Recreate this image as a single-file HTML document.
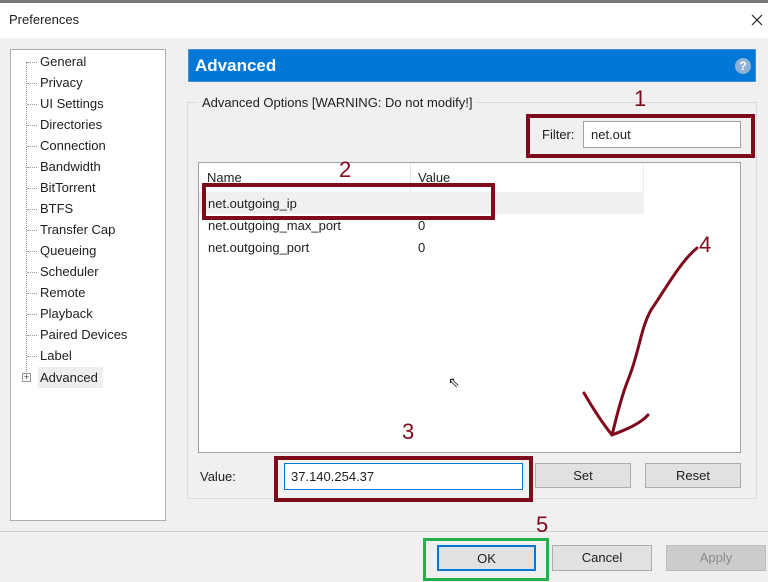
<!DOCTYPE html>
<html><head><style>
*{margin:0;padding:0;box-sizing:border-box}
body{width:768px;height:582px;background:#f0f0f0;font-family:"Liberation Sans",sans-serif;font-size:13px;color:#1e1e1e;position:relative;overflow:hidden}
.a{position:absolute;white-space:nowrap}
.red{position:absolute;border:4px solid #7e0a1c}
.num{position:absolute;color:#7e0a1c;font-size:22px;font-family:"Liberation Sans",sans-serif}
.btn{position:absolute;background:#e1e1e1;border:1px solid #adadad;text-align:center;line-height:23px}
.tree div{position:absolute;left:40px}
.dot{position:absolute;left:27px;width:10px;border-top:1px dotted #999}
</style></head><body>
<div class="a" style="left:0;top:0;width:768px;height:3px;background:#777"></div>
<div class="a" style="left:0;top:3px;width:768px;height:35px;background:#fff"></div>
<div class="a" style="left:9px;top:12px;font-size:13px">Preferences</div>
<svg class="a" style="left:751px;top:14px" width="12" height="12"><path d="M1 1L11 11M11 1L1 11" stroke="#222" stroke-width="1.2"/></svg>

<div class="a" style="left:10px;top:49px;width:156px;height:472px;background:#fff;border:1px solid #adadad"></div>
<div class="a" style="left:26px;top:62px;height:310px;border-left:1px dotted #999"></div>
<div class="tree">
<div class="a" style="top:54px">General</div>
<div class="a" style="top:75px">Privacy</div>
<div class="a" style="top:96px">UI Settings</div>
<div class="a" style="top:117px">Directories</div>
<div class="a" style="top:138px">Connection</div>
<div class="a" style="top:159px">Bandwidth</div>
<div class="a" style="top:180px">BitTorrent</div>
<div class="a" style="top:201px">BTFS</div>
<div class="a" style="top:222px">Transfer Cap</div>
<div class="a" style="top:243px">Queueing</div>
<div class="a" style="top:264px">Scheduler</div>
<div class="a" style="top:285px">Remote</div>
<div class="a" style="top:306px">Playback</div>
<div class="a" style="top:327px">Paired Devices</div>
<div class="a" style="top:348px">Label</div>
<div class="a" style="top:367px;left:38px;width:65px;height:21px;background:#eee;padding:3px 2px">Advanced</div>
</div>
<div class="dot" style="top:62px"></div><div class="dot" style="top:83px"></div><div class="dot" style="top:104px"></div><div class="dot" style="top:125px"></div><div class="dot" style="top:146px"></div><div class="dot" style="top:167px"></div><div class="dot" style="top:188px"></div><div class="dot" style="top:209px"></div><div class="dot" style="top:230px"></div><div class="dot" style="top:251px"></div><div class="dot" style="top:272px"></div><div class="dot" style="top:293px"></div><div class="dot" style="top:314px"></div><div class="dot" style="top:335px"></div><div class="dot" style="top:356px"></div>
<div class="a" style="left:22px;top:373px;width:9px;height:9px;border:1px solid #999;background:#fff;font-size:9px;line-height:7px;text-align:center;color:#333">+</div>

<div class="a" style="left:188px;top:49px;width:568px;height:33px;background:#0078d7;border:1px solid #4a90d0"></div>
<div class="a" style="left:195px;top:56px;color:#fff;font-weight:bold;font-size:17px">Advanced</div>
<div class="a" style="left:735px;top:58px;width:16px;height:16px;border-radius:50%;background:#8fb3d8;color:#fff;font-size:12px;font-weight:bold;text-align:center;line-height:16px">?</div>

<div class="a" style="left:187px;top:102px;width:570px;height:397px;border:1px solid #dcdcdc"></div>
<div class="a" style="left:198px;top:95px;background:#f0f0f0;padding:0 4px">Advanced Options [WARNING: Do not modify!]</div>

<div class="a" style="left:542px;top:127px">Filter:</div>
<div class="a" style="left:583px;top:121px;width:158px;height:27px;background:#fff;border:1px solid #a0a0a0;padding:5px 7px">net.out</div>
<div class="red" style="left:526px;top:114px;width:229px;height:44px"></div>
<div class="num" style="left:634px;top:86px">1</div>

<div class="a" style="left:198px;top:162px;width:543px;height:291px;background:#fff;border:1px solid #a0a0a0"></div>
<div class="a" style="left:199px;top:163px;width:445px;height:29px;border-right:1px solid #eee"></div>
<div class="a" style="left:410px;top:163px;height:29px;border-left:1px solid #e5e5e5"></div>
<div class="a" style="left:207px;top:170px">Name</div>
<div class="a" style="left:418px;top:170px">Value</div>
<div class="a" style="left:199px;top:192px;width:445px;height:22px;background:#f0f0f0"></div>
<div class="a" style="left:208px;top:196px">net.outgoing_ip</div>
<div class="a" style="left:208px;top:218px">net.outgoing_max_port</div>
<div class="a" style="left:418px;top:218px">0</div>
<div class="a" style="left:208px;top:240px">net.outgoing_port</div>
<div class="a" style="left:418px;top:240px">0</div>
<div class="red" style="left:202px;top:183px;width:293px;height:37px"></div>
<div class="num" style="left:339px;top:157px">2</div>
<div class="a" style="left:448px;top:374px;font-size:14px">⇖</div>

<svg class="a" style="left:0;top:0" width="768" height="582"><path d="M697 248 C680 262 665 290 651 310 C640 330 640 350 628 380 C620 400 616 420 612 435 M584 393 C595 412 604 425 612 435 C625 430 640 424 648 415" fill="none" stroke="#7e0a1c" stroke-width="3" stroke-linecap="round"/></svg>
<div class="num" style="left:699px;top:232px">4</div>

<div class="a" style="left:200px;top:469px">Value:</div>
<div class="a" style="left:284px;top:463px;width:239px;height:27px;background:#fff;border:1px solid #0078d7;padding:5px 6px">37.140.254.37</div>
<div class="red" style="left:274px;top:456px;width:259px;height:46px"></div>
<div class="num" style="left:402px;top:419px">3</div>
<div class="btn" style="left:535px;top:463px;width:96px;height:25px">Set</div>
<div class="btn" style="left:645px;top:463px;width:96px;height:25px">Reset</div>

<div class="a" style="left:0;top:531px;width:768px;border-top:1px solid #d0d0d0"></div>
<div class="num" style="left:536px;top:512px">5</div>
<div class="btn" style="left:437px;top:545px;width:99px;height:26px;border:2px solid #0078d7">OK</div>
<div class="a" style="left:423px;top:538px;width:126px;height:43px;border:3px solid #22b14c"></div>
<div class="btn" style="left:552px;top:545px;width:100px;height:26px">Cancel</div>
<div class="btn" style="left:666px;top:545px;width:100px;height:26px;background:#ccc;border-color:#bfbfbf;color:#8a8a8a">Apply</div>
</body></html>
